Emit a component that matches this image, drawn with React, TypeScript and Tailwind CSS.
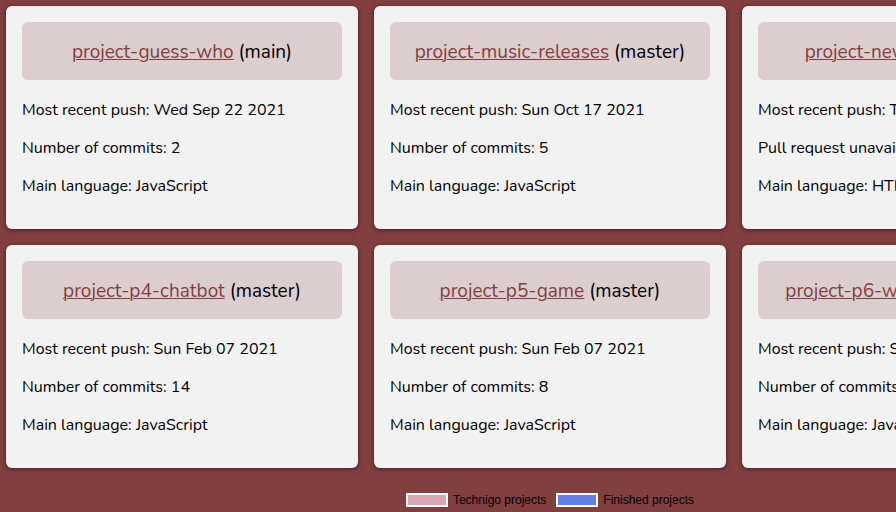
type Project = {
  name: string;
  branch: string;
  pushed: string;
  commits: string;
  language: string;
};

const projects: Project[] = [
  { name: "project-guess-who", branch: "main", pushed: "Wed Sep 22 2021", commits: "Number of commits: 2", language: "JavaScript" },
  { name: "project-music-releases", branch: "master", pushed: "Sun Oct 17 2021", commits: "Number of commits: 5", language: "JavaScript" },
  { name: "project-news-site", branch: "master", pushed: "Tue Sep 07 2021", commits: "Pull request unavailable", language: "HTML" },
  { name: "project-p4-chatbot", branch: "master", pushed: "Sun Feb 07 2021", commits: "Number of commits: 14", language: "JavaScript" },
  { name: "project-p5-game", branch: "master", pushed: "Sun Feb 07 2021", commits: "Number of commits: 8", language: "JavaScript" },
  { name: "project-p6-weather-app", branch: "main", pushed: "Sun Feb 07 2021", commits: "Number of commits: 6", language: "JavaScript" },
];

function ProjectCard({ project }: { project: Project }) {
  return (
    <article className="rounded-md bg-[#f2f2f2] p-4 pb-8 shadow-[0_1px_4px_rgba(0,0,0,0.5)]">
      <h2 className="rounded-md bg-[#dccece] pt-4 pb-3.5 text-center text-[19px] leading-[28px]">
        <a href="#" className="text-[#823f3f] underline decoration-1">
          {project.name}
        </a>{" "}
        ({project.branch})
      </h2>
      <div className="mt-[19px] flex flex-col gap-4 text-base leading-[22px]">
        <p>Most recent push: {project.pushed}</p>
        <p>{project.commits}</p>
        <p>Main language: {project.language}</p>
      </div>
    </article>
  );
}

function LegendItem({ label, swatch }: { label: string; swatch: string }) {
  return (
    <li className="flex items-center gap-[5px]">
      <span className={`h-[14px] w-[42px] border-2 border-white ${swatch}`} />
      {label}
    </li>
  );
}

export default function App() {
  return (
    <div className="min-h-screen overflow-x-hidden bg-[#823f3f] font-['Nunito','Lato',sans-serif] text-black">
      <main className="min-w-[1100px] p-1.5 pb-1">
        <section className="grid grid-cols-3 gap-4">
          {projects.map((project) => (
            <ProjectCard key={project.name} project={project} />
          ))}
        </section>
        <ul className="mt-[25px] flex justify-center gap-2.5 font-['Liberation_Sans',Arial,sans-serif] text-[12px] leading-[14px]">
          <LegendItem label="Technigo projects" swatch="bg-[#d6a8b6]" />
          <LegendItem label="Finished projects" swatch="bg-[#617fe5]" />
        </ul>
      </main>
    </div>
  );
}
